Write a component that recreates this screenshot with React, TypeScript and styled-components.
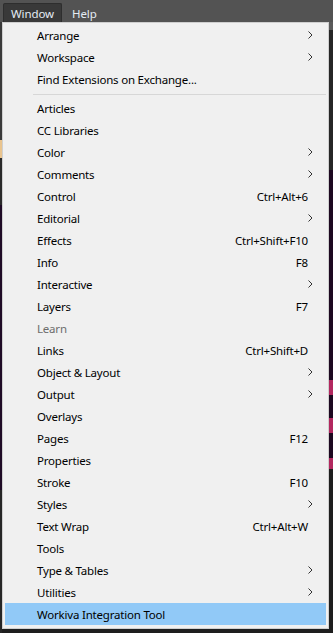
import React from 'react';
import styled, { createGlobalStyle } from 'styled-components';

type Item = {
  label: string;
  shortcut?: string;
  sub?: boolean;
  disabled?: boolean;
  active?: boolean;
  divider?: boolean;
};

const items: Item[] = [
  { label: 'Arrange', sub: true },
  { label: 'Workspace', sub: true },
  { label: 'Find Extensions on Exchange...' },
  { label: '', divider: true },
  { label: 'Articles' },
  { label: 'CC Libraries' },
  { label: 'Color', sub: true },
  { label: 'Comments', sub: true },
  { label: 'Control', shortcut: 'Ctrl+Alt+6' },
  { label: 'Editorial', sub: true },
  { label: 'Effects', shortcut: 'Ctrl+Shift+F10' },
  { label: 'Info', shortcut: 'F8' },
  { label: 'Interactive', sub: true },
  { label: 'Layers', shortcut: 'F7' },
  { label: 'Learn', disabled: true },
  { label: 'Links', shortcut: 'Ctrl+Shift+D' },
  { label: 'Object & Layout', sub: true },
  { label: 'Output', sub: true },
  { label: 'Overlays' },
  { label: 'Pages', shortcut: 'F12' },
  { label: 'Properties' },
  { label: 'Stroke', shortcut: 'F10' },
  { label: 'Styles', sub: true },
  { label: 'Text Wrap', shortcut: 'Ctrl+Alt+W' },
  { label: 'Tools' },
  { label: 'Type & Tables', sub: true },
  { label: 'Utilities', sub: true },
  { label: 'Workiva Integration Tool', active: true },
];

const GlobalStyle = createGlobalStyle`
  html, body {
    margin: 0;
    padding: 0;
    background: #1e1e1e;
  }
  body {
    font-family: "Noto Sans", "Liberation Sans", sans-serif;
  }
`;

const Screen = styled.div`
  width: 333px;
  height: 633px;
  overflow: hidden;
  background:
    linear-gradient(
        to bottom,
        #535353 0 22px,
        #3a3a3a 22px 140px,
        #e9c48e 140px 158px,
        #2a2a2a 158px 205px,
        #1f0b26 205px 490px,
        #262626 490px
      )
      left top / 2px 100% no-repeat,
    linear-gradient(
        to bottom,
        #535353 0 22px,
        #5a5a5a 22px 30px,
        #262626 30px 170px,
        #1d0820 170px 380px,
        #b2285f 380px 395px,
        #1d0820 395px 418px,
        #b2285f 418px 433px,
        #1d0820 433px 458px,
        #b2285f 458px 469px,
        #1e1e1e 469px
      )
      right top / 4px 100% no-repeat,
    #1e1e1e;
`;

const MenuBar = styled.div`
  height: 22px;
  display: flex;
  align-items: flex-end;
  gap: 2px;
  padding-left: 3px;
  background: #535353;
  box-sizing: border-box;
`;

const BarButton = styled.div<{ $open?: boolean }>`
  height: 19px;
  padding: 1px 7px 0;
  display: flex;
  align-items: center;
  box-sizing: border-box;
  font-size: 11.5px;
  letter-spacing: -0.1px;
  color: #e4ecf4;
  background: ${(p) => (p.$open ? '#393939' : 'transparent')};
  border: 1px solid ${(p) => (p.$open ? '#2e2e2e' : 'transparent')};
  border-bottom: none;
  border-radius: 2px 2px 0 0;
`;

const Panel = styled.div`
  margin-left: 2px;
  width: 327px;
  box-sizing: border-box;
  background: #f0f0f0;
  border: 1px solid #cfcfcf;
  padding: 1px 2px 3px;
`;

const Row = styled.div<{ $active?: boolean; $disabled?: boolean }>`
  height: 22px;
  display: flex;
  align-items: center;
  padding: 0 0 0 32px;
  font-size: 11.5px;
  letter-spacing: -0.2px;
  color: ${(p) => (p.$disabled ? '#6d6d6d' : '#000')};
  background: ${(p) => (p.$active ? '#91c9f7' : 'transparent')};
`;

const Label = styled.span`
  flex: 1;
  white-space: nowrap;
`;

const Shortcut = styled.span`
  margin-right: 18px;
  white-space: nowrap;
`;

const Arrow = styled.span`
  width: 18px;
  margin-right: 5px;
  display: flex;
  justify-content: flex-start;
  padding-left: 5px;
  box-sizing: border-box;
`;

const Divider = styled.div`
  height: 7px;
  display: flex;
  align-items: center;
  padding-left: 28px;
  &::after {
    content: '';
    flex: 1;
    height: 1px;
    background: #d7d7d7;
    margin-top: 2px;
  }
`;

const Chevron = () => (
  <svg width="5" height="8" viewBox="0 0 5 8">
    <path d="M0.5 0.5 L4 4 L0.5 7.5" fill="none" stroke="#333" strokeWidth="1" />
  </svg>
);

export default function App() {
  return (
    <Screen>
      <GlobalStyle />
      <MenuBar>
        <BarButton $open>Window</BarButton>
        <BarButton>Help</BarButton>
      </MenuBar>
      <Panel>
        {items.map((it, i) =>
          it.divider ? (
            <Divider key={i} />
          ) : (
            <Row key={i} $active={it.active} $disabled={it.disabled}>
              <Label>{it.label}</Label>
              {it.shortcut && <Shortcut>{it.shortcut}</Shortcut>}
              {it.sub && (
                <Arrow>
                  <Chevron />
                </Arrow>
              )}
            </Row>
          )
        )}
      </Panel>
    </Screen>
  );
}
